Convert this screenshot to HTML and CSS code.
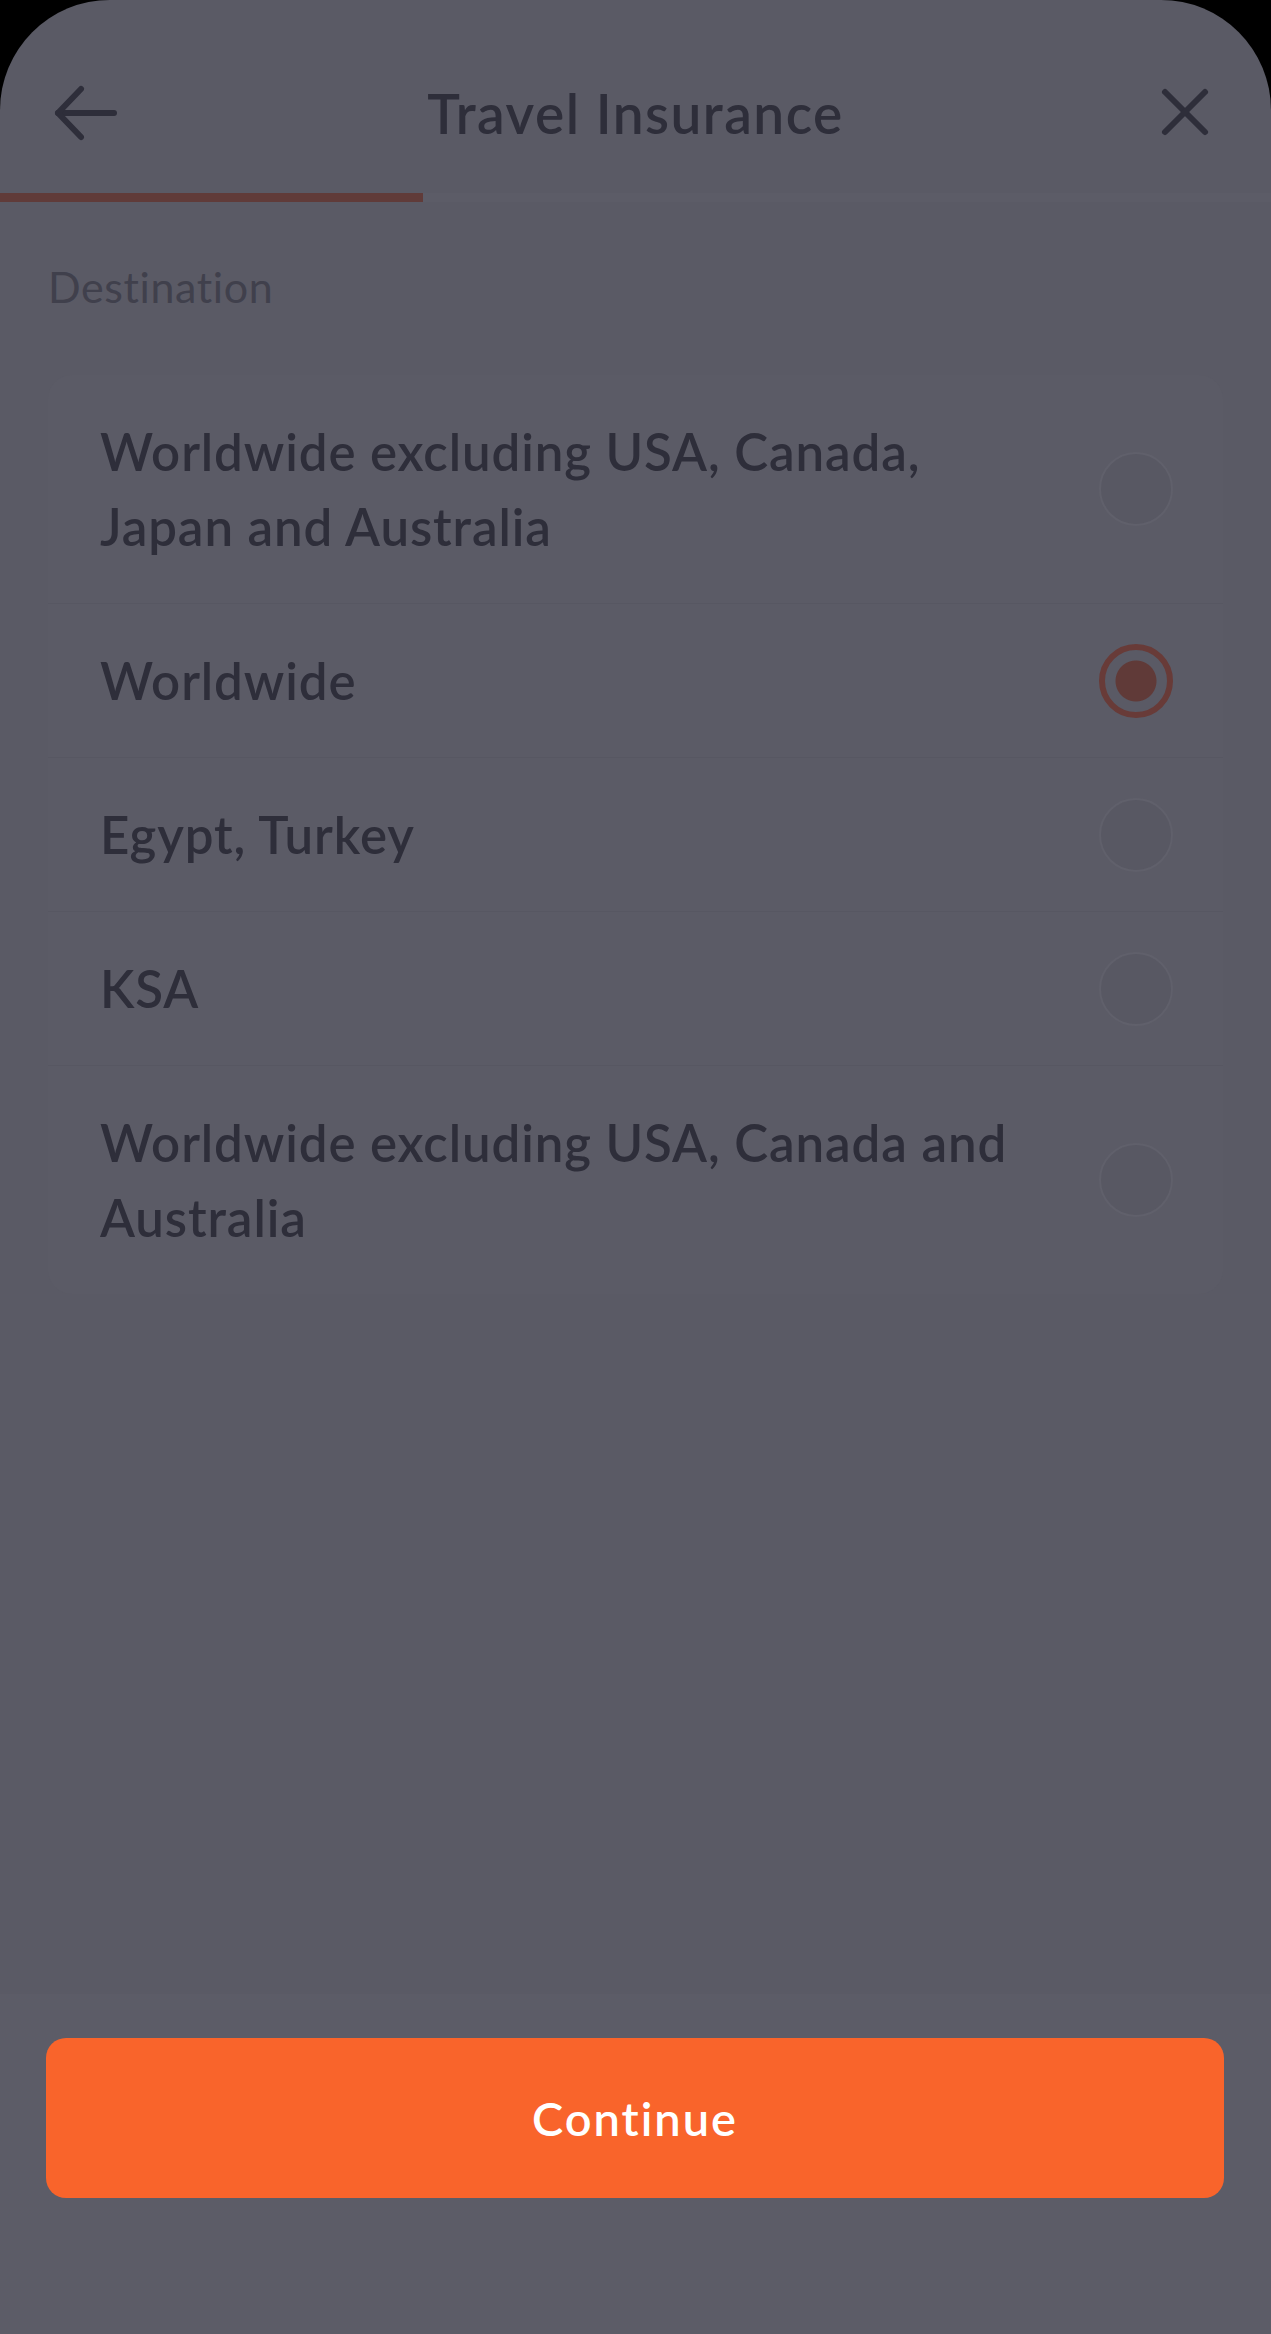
FILE: index.html
```html
<!DOCTYPE html>
<html lang="en">
<head>
    <meta charset="UTF-8">
    <meta name="viewport" content="width=device-width, initial-scale=1.0">
    <title>Travel Insurance</title>
    <link rel="stylesheet" href="styles.css">
</head>
<body>
    <div class="sheet">
        <div class="header">
            <button class="icon-btn" aria-label="Back">
                <svg width="72" height="72" viewBox="0 0 72 72" fill="none" stroke="#2e2e3a" stroke-width="6" stroke-linecap="round" stroke-linejoin="round">
                    <path d="M8 36 H64"/>
                    <path d="M31 12 L8 36 L31 60"/>
                </svg>
            </button>
            <h1 class="title">Travel Insurance</h1>
            <button class="icon-btn" aria-label="Close">
                <svg width="72" height="72" viewBox="0 0 72 72" fill="none" stroke="#2e2e3a" stroke-width="6" stroke-linecap="round">
                    <path d="M16 15 L56 55"/>
                    <path d="M56 15 L16 55"/>
                </svg>
            </button>
        </div>
        <div class="progress"><div class="progress-fill"></div></div>

        <div class="content">
            <div class="label">Destination</div>
            <div class="card" id="options"></div>
        </div>

        <div class="footer">
            <button class="continue">Continue</button>
        </div>
    </div>

    <script>
        const destinations = [
            "Worldwide excluding USA, Canada, Japan and Australia",
            "Worldwide",
            "Egypt, Turkey",
            "KSA",
            "Worldwide excluding USA, Canada and Australia"
        ];

        let selected = 1;

        function renderOptions() {
            let container = document.getElementById("options");
            container.innerHTML = "";
            destinations.forEach((name, index) => {
                let row = document.createElement("div");
                row.className = "option";
                row.innerHTML = '<div class="option-text">' + name + '</div><div class="radio"></div>';
                row.classList.toggle("selected", index === selected);
                row.onclick = () => { selected = index; renderOptions(); };
                container.appendChild(row);
            });
        }

        renderOptions();
    </script>
</body>
</html>
```

FILE: styles.css
```css
body {
    margin: 0;
    background: #000;
    font-family: Lato, "Noto Sans", sans-serif;
    color: #2e2e3a;
}
.sheet {
    background: #5a5a65;
    border-radius: 110px 110px 0 0;
    height: 2334px;
    display: flex;
    flex-direction: column;
    overflow: hidden;
}
.header {
    display: flex;
    align-items: center;
    height: 160px;
    padding: 33px 50px 0;
}
.icon-btn {
    width: 72px;
    height: 72px;
    padding: 0;
    border: none;
    background: none;
    cursor: pointer;
}
.icon-btn svg {
    display: block;
}
.title {
    flex: 1;
    margin: 0;
    text-align: center;
    font-size: 55px;
    font-weight: 600;
    letter-spacing: 1.5px;
    color: #2e2e3a;
}
.progress {
    height: 9px;
    background: #5c5c67;
}
.progress-fill {
    width: 423px;
    height: 100%;
    background: #603b39;
}
.content {
    flex: 1;
    padding: 0 48px;
}
.label {
    margin-top: 59px;
    font-size: 43px;
    line-height: 52px;
    letter-spacing: 0.6px;
    color: #40404c;
}
.card {
    margin-top: 62px;
    background: #5b5b66;
    border-radius: 24px;
    overflow: hidden;
}
.option {
    display: flex;
    align-items: center;
    justify-content: space-between;
    padding: 39px 50px 39px 52px;
    border-top: 1px solid #575762;
    cursor: pointer;
}
.option:first-child {
    border-top: none;
}
.option-text {
    max-width: 935px;
    font-size: 51px;
    font-weight: 600;
    letter-spacing: 0.9px;
    line-height: 75px;
}
.radio {
    flex-shrink: 0;
    width: 70px;
    height: 70px;
    border: 2px solid #60606b;
    border-radius: 50%;
    background: #585863;
    box-sizing: content-box;
}
.option.selected .radio {
    width: 62px;
    height: 62px;
    border: 6px solid #683b38;
    background: radial-gradient(circle, #603a38 0 20px, #5a5a65 21px);
}
.footer {
    height: 340px;
    box-sizing: border-box;
    padding: 44px 47px 0 46px;
    background: #5c5c67;
}
.continue {
    width: 100%;
    height: 160px;
    border: none;
    border-radius: 20px;
    background: #f9642b;
    color: #fff;
    font-family: Lato, "Noto Sans", sans-serif;
    font-size: 47px;
    font-weight: 600;
    letter-spacing: 2px;
    cursor: pointer;
}
```
